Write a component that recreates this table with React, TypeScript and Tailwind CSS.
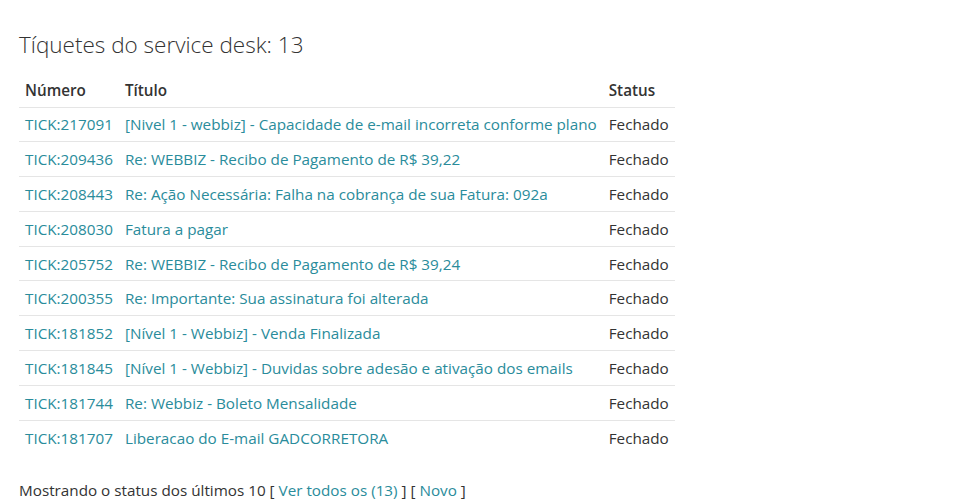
const tickets = [
  { id: "TICK:217091", title: "[Nivel 1 - webbiz] - Capacidade de e-mail incorreta conforme plano" },
  { id: "TICK:209436", title: "Re: WEBBIZ - Recibo de Pagamento de R$ 39,22" },
  { id: "TICK:208443", title: "Re: Ação Necessária: Falha na cobrança de sua Fatura: 092a" },
  { id: "TICK:208030", title: "Fatura a pagar" },
  { id: "TICK:205752", title: "Re: WEBBIZ - Recibo de Pagamento de R$ 39,24" },
  { id: "TICK:200355", title: "Re: Importante: Sua assinatura foi alterada" },
  { id: "TICK:181852", title: "[Nível 1 - Webbiz] - Venda Finalizada" },
  { id: "TICK:181845", title: "[Nível 1 - Webbiz] - Duvidas sobre adesão e ativação dos emails" },
  { id: "TICK:181744", title: "Re: Webbiz - Boleto Mensalidade" },
  { id: "TICK:181707", title: "Liberacao do E-mail GADCORRETORA" },
];

export default function App() {
  return (
    <div className="min-h-screen bg-white px-[19px] pt-[30px] text-[#333] font-['Open_Sans',sans-serif]">
      <h2 className="text-[22.5px] font-light leading-[30px] mb-[13px]">Tíquetes do service desk: 13</h2>
      <table className="text-[15.25px] leading-[20px] border-collapse">
        <thead>
          <tr className="border-b border-[#e5e5e5]">
            <th className="text-left font-semibold px-[6px] h-[34px] align-middle">Número</th>
            <th className="text-left font-semibold px-[6px] align-middle">Título</th>
            <th className="text-left font-semibold px-[6px] align-middle">Status</th>
          </tr>
        </thead>
        <tbody>
          {tickets.map((t, i) => (
            <tr key={t.id} className={i < tickets.length - 1 ? "border-b border-[#e5e5e5]" : ""}>
              <td className="px-[6px] h-[34.8px] align-middle">
                <a href="#" className="text-[#2a8c9b]">{t.id}</a>
              </td>
              <td className="px-[6px] align-middle">
                <a href="#" className="text-[#2a8c9b]">{t.title}</a>
              </td>
              <td className="px-[6px] align-middle">Fechado</td>
            </tr>
          ))}
        </tbody>
      </table>
      <p className="text-[15.25px] leading-[20px] mt-[25px]">
        Mostrando o status dos últimos 10 [ <a href="#" className="text-[#2a8c9b]">Ver todos os (13)</a> ] [ <a href="#" className="text-[#2a8c9b]">Novo</a> ]
      </p>
    </div>
  );
}
